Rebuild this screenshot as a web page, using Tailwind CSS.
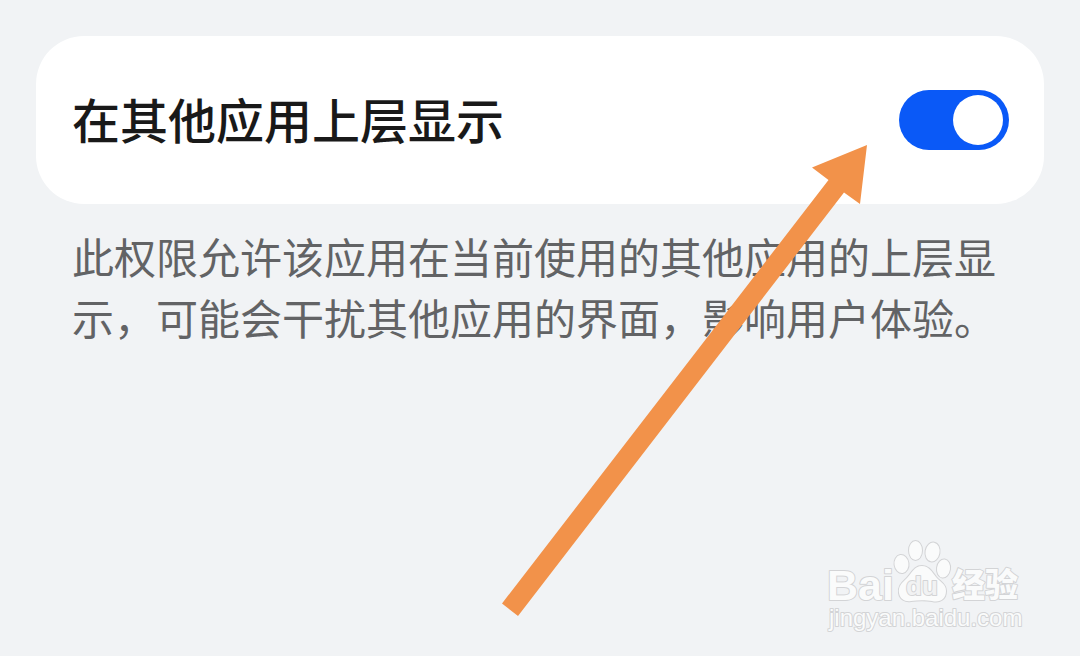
<!DOCTYPE html>
<html lang="zh-CN">
<head>
<meta charset="UTF-8">
<meta name="viewport" content="width=device-width, initial-scale=1">
<title>在其他应用上层显示</title>
<script src="https://cdn.jsdelivr.net/npm/@tailwindcss/browser@4"></script>
</head>
<body class="relative min-h-screen overflow-x-hidden bg-[#f1f3f5] font-['Noto_Sans_CJK_SC',sans-serif]">
<main class="p-9">
  <section class="flex items-center justify-between rounded-[48px] bg-white py-12 pr-[35px] pl-9">
    <label for="overlay" class="pb-1 text-5xl leading-[68px] font-medium text-[#191919]">在其他应用上层显示</label>
    <input id="overlay" type="checkbox" role="switch" checked aria-describedby="overlay-hint" class="flex h-[60px] w-[110px] shrink-0 cursor-pointer appearance-none items-center rounded-full bg-[#c9cbce] px-[6px] before:block before:size-[50px] before:rounded-full before:bg-white checked:justify-end checked:bg-[#0a59f7]">
  </section>
  <p id="overlay-hint" class="mt-[21px] px-9 text-[42px] leading-[61px] text-[#626365]">此权限允许该应用在当前使用的其他应用的上层显示，可能会干扰其他应用的界面，影响用户体验。</p>
</main>

<!-- Pointer to the switch -->
<svg class="pointer-events-none absolute top-[145px] right-[212px] h-[472px] w-[367px]" viewBox="0 0 367 472" aria-hidden="true">
  <path fill="#f2924a" d="M366 0 311 22.500 327.500 35 1 458.500 17 471 343 47.500 359 59Z"/>
</svg>

<!-- Watermark -->
<svg class="pointer-events-none absolute right-10 bottom-4 h-[110px] w-[230px]" viewBox="0 0 230 110" role="img" aria-label="Baidu 经验">
  <g fill="#fafbfb" stroke="#d3d4d6" stroke-width="2" stroke-linejoin="round" paint-order="stroke">
    <text x="17" y="70" font-family="Liberation Sans, sans-serif" font-weight="700" font-size="43">Bai</text>
    <ellipse cx="91.500" cy="34" rx="7" ry="9" transform="rotate(-8 91.500 34)"/>
    <ellipse cx="105.500" cy="20.500" rx="6.500" ry="9.500"/>
    <ellipse cx="122.500" cy="22" rx="7" ry="9.500" transform="rotate(10 122.500 22)"/>
    <ellipse cx="133.500" cy="38.500" rx="6.500" ry="9" transform="rotate(8 133.500 38.500)"/>
    <path d="M112 36C104 36 102 43 97 48C92 53 88 56 89 63C90 69 95 72 101 71C108 70 116 70 122 71C130 73 136 69 136 61C136 54 130 52 126 47C122 42 119 36 112 36Z"/>
    <text x="96" y="65" font-family="Liberation Sans, sans-serif" font-size="26" font-weight="700" fill="#f1f2f3">du</text>
    <text x="142" y="67" font-family="Noto Sans CJK SC, sans-serif" font-weight="900" font-size="33">经验</text>
    <text x="19" y="96" font-family="Liberation Sans, sans-serif" font-size="24">jingyan.baidu.com</text>
  </g>
</svg>
</body>
</html>
